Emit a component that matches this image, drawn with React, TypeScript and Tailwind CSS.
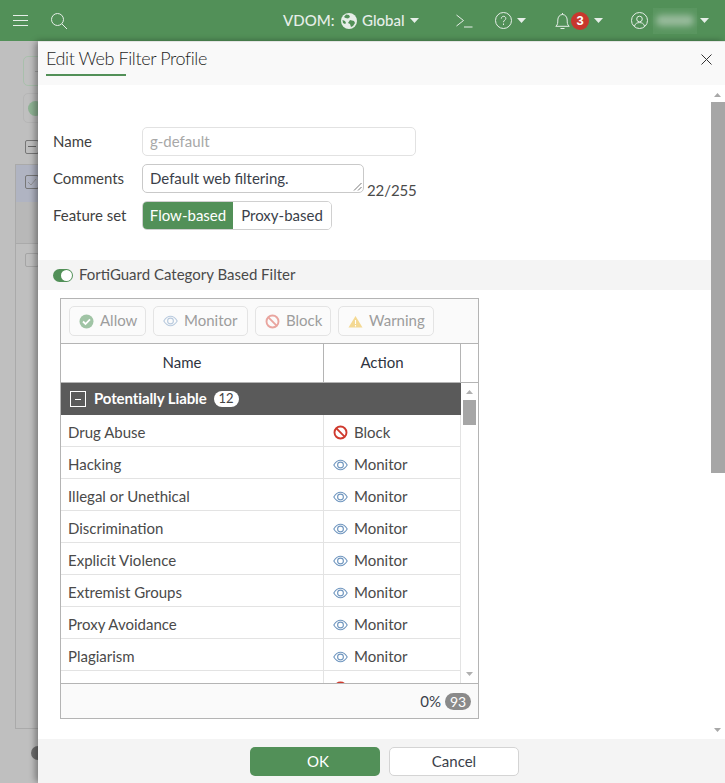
import React from "react";

const Caret = ({ className = "" }: { className?: string }) => (
  <svg width="9" height="5" viewBox="0 0 9 5" className={className}>
    <path d="M0 0h9L4.5 5z" fill="#e6eee8" />
  </svg>
);

const Eye = ({ color = "#6f96bf" }: { color?: string }) => (
  <svg width="15" height="12" viewBox="0 0 15 12" fill="none" stroke={color} strokeWidth="1.1">
    <path d="M.8 6C2.6 3 5 1.3 7.5 1.3S12.4 3 14.2 6c-1.8 3-4.2 4.7-6.7 4.7S2.6 9 .8 6z" />
    <circle cx="7.5" cy="6" r="2.9" />
  </svg>
);

const BlockIcon = ({ color = "#cf3a2e" }: { color?: string }) => (
  <svg width="15" height="15" viewBox="0 0 15 15" fill="none" stroke={color} strokeWidth="1.9">
    <circle cx="7.5" cy="7.5" r="6" />
    <path d="M3.4 3.4l8.2 8.2" />
  </svg>
);

const ToolButton = ({ icon, label, w }: { icon: React.ReactNode; label: string; w: string }) => (
  <div className={`flex h-[30px] ${w} items-center gap-[6px] rounded-[5px] border border-[#e4e4e4] bg-[#fbfbfb] pl-[9px] text-[15px] text-[#9d9d9d]`}>
    {icon}
    <span className="-mt-[2px]">{label}</span>
  </div>
);

const rows: [string, "Block" | "Monitor"][] = [
  ["Drug Abuse", "Block"],
  ["Hacking", "Monitor"],
  ["Illegal or Unethical", "Monitor"],
  ["Discrimination", "Monitor"],
  ["Explicit Violence", "Monitor"],
  ["Extremist Groups", "Monitor"],
  ["Proxy Avoidance", "Monitor"],
  ["Plagiarism", "Monitor"],
  ["", "Block"],
];

export default function App() {
  return (
    <div className="relative h-[783px] w-[725px] overflow-hidden bg-[#bfbfbf] font-['Lato',sans-serif] text-[15px] text-[#3f3f3f]">
      {/* Top bar */}
      <header className="flex h-[41px] items-center bg-[#529058] text-[#e6eee8]">
        <svg width="16" height="13" viewBox="0 0 16 13" className="ml-[13px]" stroke="#e6eee8" strokeWidth="1">
          <path d="M0 1.5h15M0 6.5h15M0 11.5h15" />
        </svg>
        <svg width="16" height="16" viewBox="0 0 16 16" className="ml-[22px]" fill="none" stroke="#e6eee8" strokeWidth="1">
          <circle cx="6.500" cy="6.500" r="6" />
          <path d="M10.800 10.800L16 16" />
        </svg>
        <span className="ml-[216px] w-[51px] text-[15px] font-medium">VDOM:</span>
        <svg width="16" height="16" viewBox="0 0 16 16" className="ml-[7px]">
          <circle cx="8" cy="8" r="8" fill="#e6eee8" />
          <path d="M5 1.5l3 .5 1 2-2 1.5L4.500 5 3 4zM9 7l4 1 1 2-2 3-2 1-1-3-2-1zM1.500 7L4 8l1 2-1 1-2-1z" fill="#529058" />
        </svg>
        <span className="ml-[5px] w-[43px] text-[15px] font-medium">Global</span>
        <Caret className="ml-[5px]" />
        <svg width="17" height="14" viewBox="0 0 17 14" className="ml-[37px]" fill="none" stroke="#e6eee8" strokeWidth="1">
          <path d="M.5 1l7 5.500-7 5.500M8 13h8.500" />
        </svg>
        <svg width="17" height="17" viewBox="0 0 17 17" className="ml-[22px]" fill="none" stroke="#e6eee8" strokeWidth="1">
          <circle cx="8.500" cy="8.500" r="8" />
          <path d="M6.300 6.600c0-3 4.500-3 4.500-.2 0 1.800-2.300 1.800-2.300 3.800M8.500 11.500v1.500" />
        </svg>
        <Caret className="ml-[5px]" />
        <svg width="15" height="18" viewBox="0 0 15 18" className="ml-[29px]" fill="none" stroke="#e6eee8" strokeWidth="1">
          <path d="M.8 14.300c2-1.500 2-3.500 2-6.300 0-3 2-5.500 4.700-5.500s4.700 2.500 4.700 5.500c0 2.800 0 4.800 2 6.300zM7.500 2.500V1M5.500 16.500h4" />
        </svg>
        <span className="ml-[1px] flex h-[18px] w-[18px] items-center justify-center rounded-full bg-[#c8372d] font-['Liberation_Sans',sans-serif] text-[13px] font-bold text-white">3</span>
        <Caret className="ml-[5px]" />
        <svg width="17" height="17" viewBox="0 0 17 17" className="ml-[28px]" fill="none" stroke="#e6eee8" strokeWidth="1">
          <circle cx="8.500" cy="8.500" r="8" />
          <circle cx="8.500" cy="7" r="2.800" />
          <path d="M3.500 14c.8-2.600 2.700-3.400 5-3.400s4.200.8 5 3.400" />
        </svg>
        <div className="ml-[5px] flex h-[26px] w-[44px] items-center justify-center bg-[#5a9660]">
          <div className="h-[11px] w-[38px] rounded-[5px] bg-[#98bb9c] blur-[3px]" />
        </div>
        <Caret className="ml-[3px]" />
      </header>

      {/* Dimmed page behind the dialog */}
      <div className="absolute left-[23px] top-[56px] flex h-[30px] w-[30px] items-center justify-center rounded-[5px] border border-[#a9bfac]">
        <div className="h-px w-[6px] bg-[#a0a0a0]" />
      </div>
      <div className="absolute left-[23px] top-[93px] h-[30px] w-[30px] rounded-[5px] border border-[#b6b6b6]">
        <div className="ml-[4px] mt-[7px] h-[15px] w-[15px] rounded-full bg-[#8fb394]" />
      </div>
      <div className="absolute left-[25px] top-[140px] h-[14px] w-[14px] rounded-[2px] border border-[#777]">
        <div className="ml-[2px] mt-[5px] h-px w-[8px] bg-[#666]" />
      </div>
      <div className="absolute left-[15px] top-[164px] h-[565px] w-[30px] border border-[#aaa]">
        <div className="h-[37px] bg-[#b0b4c2] pl-[9px] pt-[10px]">
          <div className="h-[14px] w-[14px] rounded-[2px] border border-[#777]">
            <svg width="12" height="12" viewBox="0 0 12 12" fill="none" stroke="#888" strokeWidth="0.8">
              <path d="M2 6l3 3 5-6" />
            </svg>
          </div>
        </div>
        <div className="h-[42px] border-b border-[#aaa] bg-[#b8b8b8]" />
        <div className="pl-[9px] pt-[9px]">
          <div className="h-[14px] w-[14px] rounded-[2px] border border-[#a5a5a5]" />
        </div>
      </div>
      <div className="absolute left-[31px] top-[746px] h-[14px] w-[14px] rounded-full bg-[#6e6e6e]" />

      {/* Dialog */}
      <section className="absolute bottom-0 left-[38px] right-0 top-[41px] flex flex-col rounded-l-[5px] bg-white shadow-[-3px_0_6px_rgba(0,0,0,0.35)]">
        <div className="relative flex h-[44px] shrink-0 items-start border-t border-[#e4e4e4] bg-[#f9f9f9] pl-[8px]">
          <div className="h-[34px] w-[80px] whitespace-nowrap border-b-2 border-[#529058] pt-[3px] text-[18px] font-light leading-[26px] tracking-[-0.4px] text-[#1f1f1f]">
            Edit Web Filter Profile
          </div>
          <svg width="11" height="11" viewBox="0 0 11 11" className="absolute right-[13px] top-[12px]" stroke="#333" strokeWidth="1">
            <path d="M.5.5l10 10M10.500.5l-10 10" />
          </svg>
        </div>

        <div className="relative min-h-0 flex-1">
          {/* Form */}
          <div className="pl-[15px] pt-[42px]">
            <div className="flex h-[29px] items-center">
              <span className="w-[89px]">Name</span>
              <div className="flex h-[29px] w-[274px] items-center rounded-[5px] border border-[#e2e2e2] pl-[7px] text-[#a8a8a8]">g-default</div>
            </div>
            <div className="mt-[8px] flex h-[29px] items-center">
              <span className="w-[89px]">Comments</span>
              <div className="relative flex h-[29px] w-[222px] items-center rounded-[5px] border border-[#c9c9c9] pl-[7px] text-[#3b3f4a]">
                Default web filtering.
                <svg width="9" height="9" viewBox="0 0 9 9" className="absolute bottom-[1px] right-[1px]" stroke="#555" strokeWidth="0.8">
                  <path d="M1 8.500L8.500 1M5 8.500L8.500 5" />
                </svg>
              </div>
              <span className="ml-[3px] mt-[24px] tracking-[-0.1px] text-[#4a4a4a]">22/255</span>
            </div>
            <div className="mt-[8px] flex h-[29px] items-center">
              <span className="w-[89px]">Feature set</span>
              <div className="flex h-[29px] overflow-hidden rounded-[5px] border border-[#d0d0d0]">
                <div className="-m-px flex w-[92px] items-center justify-center bg-[#529058] text-white">Flow-based</div>
                <div className="flex w-[98px] items-center justify-center bg-white text-[#3b3f4a]">Proxy-based</div>
              </div>
            </div>
          </div>

          {/* Section header */}
          <div className="mt-[30px] flex h-[30px] items-center bg-[#f4f4f4] pl-[15px]">
            <div className="flex h-[13px] w-[20px] items-center justify-end rounded-full bg-[#529058] pr-[1px]">
              <div className="h-[11px] w-[11px] rounded-full bg-white" />
            </div>
            <span className="-mt-[2px] ml-[6px] text-[#4a4a4a]">FortiGuard Category Based Filter</span>
          </div>

          {/* Table */}
          <div className="ml-[22px] mt-[8px] w-[419px] border border-[#b4b4b4]">
            <div className="flex h-[44px] items-center gap-[7px] bg-[#fafafa] pl-[8px]">
              <ToolButton
                w="w-[77px]"
                label="Allow"
                icon={
                  <svg width="15" height="15" viewBox="0 0 15 15">
                    <circle cx="7.500" cy="7.500" r="7" fill="#a0c4a5" />
                    <path d="M4 7.500l2.500 2.500L11 5.300" fill="none" stroke="#fff" strokeWidth="1.800" />
                  </svg>
                }
              />
              <ToolButton w="w-[95px]" label="Monitor" icon={<Eye color="#b8cade" />} />
              <ToolButton w="w-[76px]" label="Block" icon={<BlockIcon color="#e9a59f" />} />
              <ToolButton
                w="w-[96px]"
                label="Warning"
                icon={
                  <svg width="15" height="13" viewBox="0 0 15 13">
                    <path d="M7.500 1L14.500 12.500H.5z" fill="#f4d993" />
                    <path d="M7.500 5v4M7.500 10v1.500" stroke="#fff" strokeWidth="1.100" />
                  </svg>
                }
              />
            </div>
            <div className="flex h-[40px] border-y border-[#b4b4b4] bg-white text-[#2f3440]">
              <div className="flex w-[263px] items-center justify-center border-r border-[#b4b4b4] pb-[2px] pr-[20px]">Name</div>
              <div className="flex w-[137px] items-center justify-center border-r border-[#b4b4b4] pb-[2px] pr-[20px]">Action</div>
            </div>
            <div className="relative h-[300px] overflow-hidden">
              <div className="w-[400px]">
                <div className="flex h-[32px] items-center bg-[#5a5a5a] pl-[9px] font-bold text-white">
                  <div className="flex h-[16px] w-[16px] items-center justify-center border border-white">
                    <div className="h-px w-[6px] bg-white" />
                  </div>
                  <span className="-mt-[2px] ml-[8px] tracking-[-0.1px]">Potentially Liable</span>
                  <span className="ml-[7px] flex h-[16px] w-[25px] items-center justify-center rounded-full bg-white text-[13px] font-normal text-[#444]">12</span>
                </div>
                {rows.map(([name, action], i) => (
                  <div key={i} className="flex h-[32px] border-b border-[#e3e3e3]">
                    <div className="flex w-[263px] items-center border-r border-[#e3e3e3] pl-[7px] pt-[4px] text-[#4a4a4a]">{name}</div>
                    <div className="flex w-[137px] items-center gap-[6px] border-r border-[#e3e3e3] pl-[9px] pt-[4px] text-[#4a4a4a]">
                      {action === "Block" ? <BlockIcon /> : <Eye />}
                      {name && <span>{action}</span>}
                    </div>
                  </div>
                ))}
              </div>
              {/* Inner scrollbar */}
              <svg width="7" height="4" viewBox="0 0 7 4" className="absolute right-[5px] top-[7px]"><path d="M0 4h7L3.500 0z" fill="#b0b0b0" /></svg>
              <div className="absolute right-[2px] top-[17px] h-[25px] w-[13px] bg-[#a6a6a6]" />
              <svg width="7" height="4" viewBox="0 0 7 4" className="absolute bottom-[7px] right-[5px]"><path d="M0 0h7L3.500 4z" fill="#b0b0b0" /></svg>
            </div>
            <div className="flex h-[35px] items-center justify-end border-t border-[#b4b4b4] bg-[#fafafa] pr-[7px] text-[#3b3f4a]">
              <span>0%</span>
              <span className="ml-[4px] flex h-[17px] w-[26px] items-center justify-center rounded-full bg-[#8a8a8a] text-[14px] text-white">93</span>
            </div>
          </div>

          {/* Outer scrollbar */}
          <svg width="7" height="4" viewBox="0 0 7 4" className="absolute right-[4px] top-[8px]"><path d="M0 4h7L3.500 0z" fill="#a8a8a8" /></svg>
          <div className="absolute right-0 top-[17px] h-[371px] w-[14px] bg-[#a6a6a6]" />
          <svg width="7" height="4" viewBox="0 0 7 4" className="absolute bottom-[7px] right-[4px]"><path d="M0 0h7L3.500 4z" fill="#a8a8a8" /></svg>
        </div>

        {/* Footer */}
        <div className="flex h-[44px] shrink-0 items-center justify-center gap-[9px] bg-[#f4f4f4] pl-[6px] pt-px">
          <div className="flex h-[29px] w-[130px] items-center justify-center rounded-[5px] bg-[#529058] pl-[6px] text-white">OK</div>
          <div className="flex h-[29px] w-[130px] items-center justify-center rounded-[5px] border border-[#d4d4d4] bg-white text-[#3b3f4a]">Cancel</div>
        </div>
      </section>
    </div>
  );
}
